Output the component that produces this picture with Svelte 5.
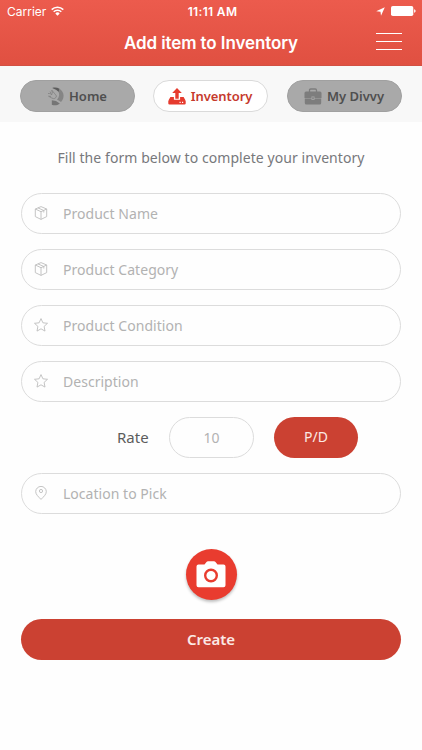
<script>
	const tabs = [
		{ name: 'Home', icon: 'home' },
		{ name: 'Inventory', icon: 'upload' },
		{ name: 'My Divvy', icon: 'case' },
	];

	const fields = [
		{ name: 'Product Name', icon: 'box' },
		{ name: 'Product Category', icon: 'box' },
		{ name: 'Product Condition', icon: 'star' },
		{ name: 'Description', icon: 'star' },
	];

	let activeTab = 'Inventory';
</script>

<div class="page">
	<header>
		<div class="status-bar">
			<div class="carrier">
				<span>Carrier</span>
				<svg width="13" height="10" viewBox="0 0 13 10" fill="none" stroke="#fff" stroke-width="1.5">
					<path d="M.7 3.6a8.3 8.3 0 0 1 11.6 0M2.7 5.8a5.4 5.4 0 0 1 7.6 0" />
					<path d="M4.3 7.4a3.1 3.1 0 0 1 4.4 0L6.5 9.7z" fill="#fff" stroke="none" />
				</svg>
			</div>
			<span class="time">11:11 AM</span>
			<div class="indicators">
				<svg width="9" height="9" viewBox="0 0 9 9" fill="#fff"><path d="M8.8.3 5 8.8 4.5 4.7.2 4.2z" /></svg>
				<svg width="25" height="10" viewBox="0 0 25 10" fill="#fff">
					<rect width="22.3" height="10" rx="1.8" />
					<path d="M23.1 3.2c2 .4 2 3.2 0 3.6z" />
				</svg>
			</div>
		</div>
		<div class="title-bar">
			<h1>Add item to Inventory</h1>
			<button class="menu" aria-label="Menu"><i></i><i></i><i></i></button>
		</div>
	</header>

	<nav>
		{#each tabs as tab}
			<button class="tab" class:active={activeTab === tab.name} on:click={() => (activeTab = tab.name)}>
				{#if tab.icon === 'home'}
					<svg width="17" height="19" viewBox="0 0 17 19">
						<path d="M5.200 1c2.500-.8 5-.5 7.300.8V5.500L9 2.800z" fill="#5c5c5c" />
						<path d="M12.500 1.800c4.800 3 5.500 9 1.500 13.200L10 12.500C12 10.500 12.800 8 11.500 4.800z" fill="#858585" />
						<path d="M4.800 13.200 9 14l3.800 2.400c-2.200 2-5.200 2.400-8 1.400z" fill="#757575" />
						<path d="M1 6.500c2-.3 3 .5 4 1.500L3 4.500M5.500 6.500 4.800 3.200 7.800 6.800 9.500 9C9 11.500 7 12.300 4.800 11L1.500 9.200l2.500.2" fill="none" stroke="#808080" stroke-width=".8" />
					</svg>
				{:else if tab.icon === 'upload'}
					<svg width="18" height="17" viewBox="0 0 18 17" fill="#e63b2e">
						<path d="M9 0 4.200 5h3.100v5.700h3.400V5h3.100z" />
						<path d="M2.400 9h3.500v2.800h6.200V9h3.500l1.700 3H.7z" />
						<path fill-rule="evenodd" d="M1.500 12h15q1.200 0 1.200 1v2.500q0 1-1.200 1h-15q-1.200 0-1.200-1V13q0-1 1.200-1zM11.500 13.700v1.200h1.200v-1.200zM14 13.700v1.200h1.200v-1.200z" />
					</svg>
				{:else}
					<svg width="18" height="17" viewBox="0 0 18 17" fill="#7d7d7d">
						<path d="M5.500 4V2.300q0-1.300 1.300-1.300h4.400q1.300 0 1.300 1.300V4" fill="none" stroke="#7d7d7d" stroke-width="1.300" />
						<path d="M2 3.500h14q1.500 0 1.500 1.500v5h-7V8.500h-3V10h-7V5Q.5 3.500 2 3.500z" />
						<path d="M.8 10.600h6.700V12h3v-1.400h6.700V15q0 1.500-1.500 1.500H2.300Q.8 16.500.8 15z" />
						<path d="M8.300 9.200h1.400v2H8.300z" />
					</svg>
				{/if}
				<span>{tab.name}</span>
			</button>
		{/each}
	</nav>

	<main>
		<p class="intro">Fill the form below to complete your inventory</p>

		<div class="form">
			{#each fields as field}
				<label class="field">
					{#if field.icon === 'box'}
						<svg width="14" height="14" viewBox="0 0 14 14">
							<path d="M7 .6 12.700 3v7.600L7 13.400 1.300 10.600V3zM1.300 3 7 5.700 12.700 3M7 5.700v7.700M4 1.900l5.800 2.600v2" />
						</svg>
					{:else}
						<svg width="14" height="14" viewBox="0 0 14 14">
							<path d="m7 .6 1.900 4.200 4.600.5-3.400 3.100.9 4.700L7 10.800l-4 2.300.9-4.700L.5 5.300l4.600-.5z" />
						</svg>
					{/if}
					<input type="text" placeholder={field.name} />
				</label>
			{/each}

			<div class="rate-row">
				<span class="rate-label">Rate</span>
				<input class="rate-input" type="text" placeholder="10" aria-label="Rate" />
				<button class="unit">P/D</button>
			</div>

			<label class="field">
				<svg width="14" height="14" viewBox="0 0 14 14">
					<path d="M7 13.400C4.500 10.800 1.700 8.500 1.700 5.700a5.300 5.300 0 0 1 10.600 0c0 2.800-2.800 5.100-5.300 7.700z" />
					<circle cx="7" cy="5" r="1.600" />
				</svg>
				<input type="text" placeholder="Location to Pick" />
			</label>
		</div>

		<button class="camera" aria-label="Add photo">
			<svg width="30" height="27" viewBox="0 0 30 27">
				<path d="M2.500 3.500h6L10.500 1q.6-.8 1.500-.8h6q.9 0 1.500.8l2 2.500h6q2 0 2 2v18.800q0 2-2 2h-25q-2 0-2-2V5.500q0-2 2-2z" fill="#fff" />
				<circle cx="15" cy="14.500" r="5.800" fill="#fff" stroke="#e93c2f" stroke-width="2.400" />
			</svg>
		</button>

		<button class="create">Create</button>
	</main>
</div>

<style>
	:global(body) {
		background: #fefefe;
	}

	.page {
		width: 422px;
		height: 750px;
		overflow: hidden;
		background: #fefefe;
		font-family: 'Noto Sans', sans-serif;
	}

	button,
	input {
		box-sizing: border-box;
		margin: 0;
		padding: 0;
		border: 0;
		font-family: inherit;
	}

	header {
		height: 66px;
		box-sizing: border-box;
		background: linear-gradient(#ec5b4d, #e05041);
		border-bottom: 1px solid #d25043;
		color: #fff;
		font-family: Inter, sans-serif;
	}

	.status-bar {
		display: grid;
		grid-template-columns: 1fr auto 1fr;
		align-items: center;
		height: 22px;
		padding: 0 6px 0 7px;
		font-size: 12px;
	}

	.carrier,
	.indicators {
		display: flex;
		align-items: center;
		gap: 5px;
	}

	.indicators {
		justify-content: flex-end;
		gap: 6px;
	}

	.time {
		padding-left: 2px;
		font-weight: 600;
		letter-spacing: 0.35px;
	}

	.title-bar {
		display: grid;
		grid-template-columns: 1fr auto 1fr;
		align-items: center;
		height: 42px;
		padding: 0 20px;
	}

	h1 {
		grid-column: 2;
		margin: 0;
		font-size: 17px;
		font-weight: 600;
		letter-spacing: -0.1px;
		white-space: nowrap;
	}

	.menu {
		display: flex;
		flex-direction: column;
		justify-self: end;
		gap: 7px;
		width: 26px;
		margin-top: -3px;
		background: none;
	}

	.menu i {
		height: 1px;
		background: #fff;
	}

	nav {
		display: flex;
		justify-content: space-between;
		align-items: center;
		height: 56px;
		padding: 4px 20px 0;
		box-sizing: border-box;
		background: #f8f8f8;
	}

	.tab {
		display: flex;
		align-items: center;
		justify-content: center;
		gap: 5px;
		width: 115px;
		height: 32px;
		padding-right: 1px;
		border: 1px solid #a0a0a0;
		border-radius: 16px;
		background: #a9a9a9;
		color: #4f4f4f;
		font-size: 13px;
		font-weight: 600;
	}

	.tab.active {
		margin-right: 1px;
		border-color: #dadada;
		background: #fff;
		color: #c63a2d;
		letter-spacing: -0.05px;
	}

	main {
		display: flex;
		flex-direction: column;
		align-items: center;
		padding: 0 21px;
	}

	.intro {
		margin: 26px 0 25px;
		color: #77787c;
		font-size: 14px;
		line-height: 20px;
		letter-spacing: 0.07px;
		white-space: nowrap;
	}

	.form {
		display: flex;
		flex-direction: column;
		gap: 15px;
		width: 100%;
	}

	.field {
		display: flex;
		align-items: center;
		gap: 15px;
		height: 41px;
		padding: 0 12px 1px;
		box-sizing: border-box;
		border: 1px solid #dcdcdc;
		border-radius: 21px;
	}

	.field svg {
		fill: none;
		stroke: #bdbdbd;
		stroke-width: 0.9;
		stroke-linejoin: round;
	}

	.field input {
		flex: 1;
		background: none;
		font-size: 14px;
		letter-spacing: 0.03px;
	}

	input::placeholder {
		color: #b2b2b2;
		opacity: 1;
	}

	.rate-row {
		display: flex;
		align-items: center;
		height: 41px;
		padding-left: 96px;
	}

	.rate-label {
		width: 52px;
		padding-bottom: 2px;
		color: #5c5c5c;
		font-size: 15px;
	}

	.rate-input {
		width: 85px;
		height: 41px;
		padding-bottom: 1px;
		border: 1px solid #dcdcdc;
		border-radius: 21px;
		background: none;
		font-size: 14px;
		text-align: center;
	}

	.unit {
		width: 84px;
		height: 41px;
		margin-left: 20px;
		padding-bottom: 2px;
		border-radius: 21px;
		background: #cb4132;
		color: #fbe9e6;
		font-size: 14px;
	}

	.camera {
		display: flex;
		align-items: center;
		justify-content: center;
		width: 51px;
		height: 51px;
		margin: 35px 0 19px;
		border-radius: 50%;
		background: #e93c2f;
		box-shadow: 0 2px 3px rgba(0, 0, 0, 0.25);
	}

	.create {
		width: 100%;
		height: 41px;
		padding-bottom: 1px;
		border-radius: 21px;
		background: #cb4132;
		color: #fbe9e6;
		font-size: 15px;
		font-weight: 600;
	}
</style>
